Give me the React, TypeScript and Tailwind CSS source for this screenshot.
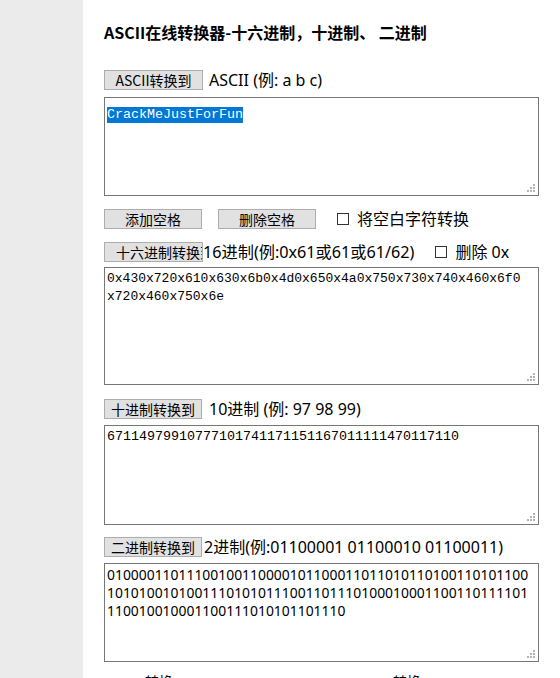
import React from 'react';

const ui = { fontFamily: '"Noto Sans CJK SC", "Noto Sans", sans-serif' };
const label = { fontFamily: '"Noto Sans", "Noto Sans CJK SC", sans-serif' };
const mono = { fontFamily: '"Liberation Mono", "DejaVu Sans Mono", monospace' };

const HEX = ['0x430x720x610x630x6b0x4d0x650x4a0x750x730x740x460x6f0', 'x720x460x750x6e'];
const DEC = '67114979910777101741171151167011111470117110';
const BIN = [
  '01000011011100100110000101100011011010110100110101100',
  '10101001010011101010111001101110100010001100110111101',
  '110010010001100111010101101110',
];

function Grip() {
  return (
    <svg className="absolute right-[3px] bottom-[3px]" width="8" height="8" viewBox="0 0 8 8">
      <rect x="6" y="0" width="2" height="2" fill="#b5b5b5" />
      <rect x="3" y="3" width="2" height="2" fill="#b5b5b5" />
      <rect x="6" y="3" width="2" height="2" fill="#b5b5b5" />
      <rect x="0" y="6" width="2" height="2" fill="#b5b5b5" />
      <rect x="3" y="6" width="2" height="2" fill="#b5b5b5" />
      <rect x="6" y="6" width="2" height="2" fill="#b5b5b5" />
    </svg>
  );
}

function Area({ h, children }: { h: string; children: React.ReactNode }) {
  return (
    <div className={`relative w-[435px] ${h} border border-[#767676] bg-white px-[2px] pt-[2px] text-black`}>
      {children}
      <Grip />
    </div>
  );
}

function Btn({ children, w = 'w-[99px]', left }: { children: React.ReactNode; w?: string; left?: boolean }) {
  return (
    <button
      style={ui}
      className={`${w} h-[20px] shrink-0 overflow-hidden whitespace-nowrap border border-[#adadad] bg-[#e1e1e1] text-[14px] leading-[18px] text-black ${left ? 'pl-[11px] text-left' : 'text-center'}`}
    >
      {children}
    </button>
  );
}

function Check() {
  return <span className="inline-block h-[12px] w-[12px] shrink-0 border border-[#333] bg-white" />;
}

export default function App() {
  return (
    <div className="flex min-h-[678px] w-[560px] bg-white">
      <div className="w-[83px] shrink-0 bg-[#ebebeb]" />
      <div className="flex-1 pl-[21px] pt-[22px]">
        <h1 style={ui} className="text-[16px] font-bold leading-[20px] text-black">
          ASCII在线转换器-十六进制，十进制、 二进制
        </h1>

        <div className="mt-[28px] flex h-[20px] items-center">
          <Btn>ASCII转换到</Btn>
          <span style={label} className="ml-[6px] text-[16px] leading-[20px] text-black">ASCII (例: a b c)</span>
        </div>
        <div className="mt-[7px]">
          <Area h="h-[99px]">
            <span style={mono} className="inline-block bg-[#0078d7] text-[13.33px] leading-[16px] text-white">
              CrackMeJustForFun
            </span>
          </Area>
        </div>

        <div className="mt-[13px] flex h-[20px] items-center">
          <Btn w="w-[98px]">添加空格</Btn>
          <div className="ml-[16px]">
            <Btn w="w-[98px]">删除空格</Btn>
          </div>
          <div className="ml-[21px] flex items-center gap-[8px]">
            <Check />
            <span style={label} className="text-[16px] leading-[20px] text-black">将空白字符转换</span>
          </div>
        </div>

        <div className="mt-[13px] flex h-[20px] items-center">
          <Btn left>十六进制转换到</Btn>
          <span style={label} className="text-[16.2px] leading-[20px] text-black">16进制(例:0x61或61或61/62)</span>
          <div className="ml-[21px] flex items-center gap-[8px]">
            <Check />
            <span style={label} className="text-[16px] leading-[20px] text-black">删除 0x</span>
          </div>
        </div>
        <div className="mt-[5px]">
          <Area h="h-[118px]">
            <div style={mono} className="whitespace-pre text-[13px] leading-[18px]">
              {HEX.join('\n')}
            </div>
          </Area>
        </div>

        <div className="mt-[14px] flex h-[20px] items-center">
          <Btn w="w-[98px]">十进制转换到</Btn>
          <span style={label} className="ml-[7px] text-[16px] leading-[20px] text-black">10进制 (例: 97 98 99)</span>
        </div>
        <div className="mt-[6px]">
          <Area h="h-[100px]">
            <div style={mono} className="whitespace-pre text-[13.33px] leading-[18px]">{DEC}</div>
          </Area>
        </div>

        <div className="mt-[12px] flex h-[20px] items-center">
          <Btn w="w-[98px]">二进制转换到</Btn>
          <span style={label} className="ml-[2px] text-[16px] leading-[20px] text-black">2进制(例:01100001 01100010 01100011)</span>
        </div>
        <div className="mt-[6px]">
          <Area h="h-[99px]">
            <div style={label} className="whitespace-pre text-[13.9px] leading-[18px]">
              {BIN.join('\n')}
            </div>
          </Area>
        </div>

        <div style={ui} className="mt-[10px] flex text-[14px] leading-[18px] text-black">
          <span className="ml-[41px]">转换</span>
          <span className="ml-[220px]">转换</span>
        </div>
      </div>
    </div>
  );
}
